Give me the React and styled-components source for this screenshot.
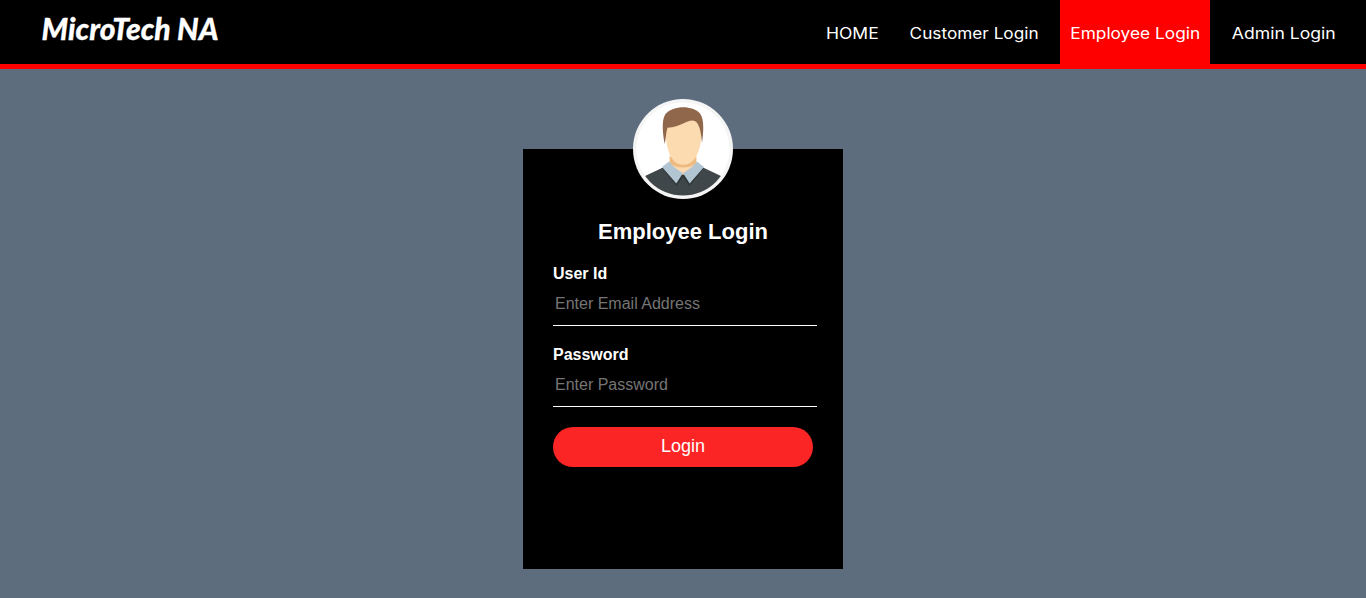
import React from "react";
import styled, { createGlobalStyle } from "styled-components";

const GlobalStyle = createGlobalStyle`
  body {
    margin: 0;
    background: #5d6d7e;
    font-family: "Liberation Sans", Arial, sans-serif;
  }
`;

const Header = styled.header`
  box-sizing: border-box;
  height: 69px;
  display: flex;
  justify-content: space-between;
  background: #000;
  border-bottom: 5px solid #f00;
`;

const Logo = styled.svg`
  display: block;
  width: 240px;
  height: 60px;
  fill: #fff;
  stroke: #fff;
  stroke-width: 0.3px;
  font: italic 900 31px Lato, sans-serif;
`;

const Nav = styled.nav`
  display: flex;
  gap: 12px;
  margin-right: 20px;
`;

const NavLink = styled.a`
  box-sizing: border-box;
  width: ${(p) => p.$width}px;
  height: 64px;
  display: flex;
  justify-content: center;
  background: ${(p) => (p.$active ? "#f00" : "transparent")};
  color: #fff;
  font: 400 15.5px/67px Inter, sans-serif;
  white-space: nowrap;
  text-decoration: none;
`;

const NavText = styled.span`
  display: inline-block;
  transform: scaleX(${(p) => p.$stretch});
`;

const Card = styled.main`
  box-sizing: border-box;
  width: 320px;
  height: 420px;
  margin: 80px auto 0;
  padding: 0 30px;
  background: #000;
  color: #fff;
`;

const Avatar = styled.svg`
  display: block;
  width: 100px;
  height: 100px;
  margin: 0 auto -30px;
  transform: translateY(-50px);
`;

const Title = styled.h1`
  margin: 0 0 20px;
  font-size: 22px;
  line-height: 25px;
  text-align: center;
`;

const Label = styled.label`
  display: block;
  padding-top: 1px;
  font-size: 16px;
  font-weight: bold;
  line-height: 18px;
`;

const Input = styled.input`
  box-sizing: border-box;
  display: block;
  width: 264px;
  height: 43px;
  margin: 0 0 19px;
  padding: 1px 2px;
  border: 0;
  border-bottom: 1px solid #fff;
  outline: 0;
  background: transparent;
  color: #fff;
  font: 16px "Liberation Sans", Arial, sans-serif;
  &::placeholder {
    color: #757575;
  }
`;

const LoginButton = styled.button`
  display: block;
  width: 260px;
  height: 40px;
  margin-top: 20px;
  padding: 0 0 2px;
  border: 0;
  border-radius: 20px;
  background: #fb2525;
  color: #fff;
  font: 18px "Liberation Sans", Arial, sans-serif;
`;

const links = [
  { label: "HOME", width: 72, stretch: 1.13 },
  { label: "Customer Login", width: 148, stretch: 1.11 },
  { label: "Employee Login", width: 150, stretch: 1.115, active: true },
  { label: "Admin Login", width: 124, stretch: 1.135 },
];

function Portrait() {
  return (
    <Avatar viewBox="0 0 100 100" aria-label="Employee">
      <defs>
        <clipPath id="disc">
          <circle cx="50" cy="50" r="46.5" />
        </clipPath>
      </defs>
      <circle cx="50" cy="50" r="50" fill="#f5f5f5" />
      <circle cx="50" cy="50" r="46.5" fill="#fff" />
      <g clipPath="url(#disc)">
        <path d="M11 77.500L30 68.500H70L89 77.500V100H11Z" fill="#40474a" />
        <path d="M29 69L43.500 87L50 78L56.500 87L71 69L50 73Z" fill="#2f3638" />
        <path d="M36.700 56H63.300V66L50 76L36.700 66Z" fill="#fdd9ae" />
        <path d="M36.700 58H63.300V65Q50 72 36.700 65Z" fill="#edba82" />
        <path d="M36 62.500L29 68L43.300 84.500L50 74Q41 69 36 62.500ZM64 62.500L71 68L56.700 84.500L50 74Q59 69 64 62.500Z" fill="#b1c6d2" />
        <path d="M32.500 29C32.500 17 38 16 50 16C63 16 68.500 20 68.500 32C68.500 48 64 65.700 50 65.700C37 65.700 32.500 48 32.500 29Z" fill="#fddbb0" />
        <path d="M31.700 45C29 31 29 20 32.500 15C40 6 60 6 67 14.500C71.500 20 70.500 34 69 44C68 32 66 21.500 59.500 21.500C53 21.500 48 28 34.500 28.700C33 33 33 39 31.700 45Z" fill="#91674c" />
      </g>
    </Avatar>
  );
}

export default function App() {
  return (
    <>
      <GlobalStyle />
      <Header>
        <Logo viewBox="0 0 240 60">
          <text x="41.5" y="40" textLength="177" lengthAdjust="spacingAndGlyphs">
            MicroTech NA
          </text>
        </Logo>
        <Nav>
          {links.map((l) => (
            <NavLink key={l.label} $width={l.width} $active={l.active}>
              <NavText $stretch={l.stretch}>{l.label}</NavText>
            </NavLink>
          ))}
        </Nav>
      </Header>
      <Card>
        <Portrait />
        <Title>Employee Login</Title>
        <Label htmlFor="user">User Id</Label>
        <Input id="user" placeholder="Enter Email Address" />
        <Label htmlFor="password">Password</Label>
        <Input id="password" type="password" placeholder="Enter Password" />
        <LoginButton>Login</LoginButton>
      </Card>
    </>
  );
}
